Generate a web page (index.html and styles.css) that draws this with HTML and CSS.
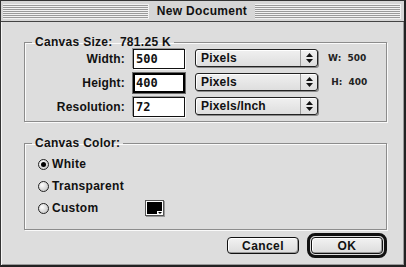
FILE: index.html
```html
<!DOCTYPE html>
<html lang="en">
<head>
<meta charset="UTF-8" />
<title>New Document</title>
<link rel="stylesheet" href="styles.css">
</head>
<body>
<div class="window">
  <div class="titlebar">
    <span class="stripes"></span>
    <span class="title">New Document</span>
    <span class="stripes"></span>
  </div>

  <div class="content">
    <fieldset class="group size-group">
      <legend>Canvas Size:&nbsp; 781.25 K</legend>
      <div class="rows">
        <label class="lbl">Width:</label>
        <div class="field">500</div>
        <div class="popup"><span>Pixels</span><span class="arrows"><svg width="7" height="10" viewBox="0 0 7 10"><polygon points="3.5 0, 7 4, 0 4" fill="#111"/><polygon points="0 6, 7 6, 3.5 10" fill="#111"/></svg></span></div>
        <span class="note">W:&nbsp; 500</span>

        <label class="lbl">Height:</label>
        <div class="field focused">400</div>
        <div class="popup"><span>Pixels</span><span class="arrows"><svg width="7" height="10" viewBox="0 0 7 10"><polygon points="3.5 0, 7 4, 0 4" fill="#111"/><polygon points="0 6, 7 6, 3.5 10" fill="#111"/></svg></span></div>
        <span class="note">&nbsp;H:&nbsp; 400</span>

        <label class="lbl">Resolution:</label>
        <div class="field">72</div>
        <div class="popup"><span>Pixels/Inch</span><span class="arrows"><svg width="7" height="10" viewBox="0 0 7 10"><polygon points="3.5 0, 7 4, 0 4" fill="#111"/><polygon points="0 6, 7 6, 3.5 10" fill="#111"/></svg></span></div>
        <span class="note"></span>
      </div>
    </fieldset>

    <fieldset class="group color-group">
      <legend>Canvas Color:</legend>
      <div class="radios">
        <div class="radio-row"><span class="radio checked"></span><span>White</span></div>
        <div class="radio-row"><span class="radio"></span><span>Transparent</span></div>
        <div class="radio-row"><span class="radio"></span><span class="custom-label">Custom</span><span class="swatch"><span class="swatch-arrow"></span></span></div>
      </div>
    </fieldset>

    <div class="buttons">
      <button class="btn">Cancel</button>
      <span class="default-ring"><button class="btn">OK</button></span>
    </div>
  </div>
</div>
</body>
</html>
```

FILE: styles.css
```css
:root {
  --face: #dddddd;
  --etch: #8c8c8c;
  --font-ui: "Liberation Sans", Arial, sans-serif;
  --font-mono: "DejaVu Sans Mono", monospace;
}

body {
  margin: 0;
  background: var(--face);
  font-family: var(--font-ui);
  font-size: 12px;
  font-weight: bold;
  color: #111;
}

.window {
  width: 406px;
  height: 267px;
  box-sizing: border-box;
  background: var(--face);
  border: 1px solid #333;
  border-right: 2px solid #222;
  border-bottom: 2px solid #222;
  box-shadow: inset 1px 1px 0 #f6f6f6, inset -1px -1px 0 #9a9a9a;
}

.titlebar {
  height: 20px;
  display: flex;
  align-items: center;
  gap: 6px;
  padding: 0 3px 0 2px;
  border-bottom: 1px solid #444;
  background: #d6d6d6;
}

.stripes {
  flex: 1;
  height: 15px;
  background: repeating-linear-gradient(to bottom, #f2f2f2 0 1px, #9a9a9a 1px 2px);
  border-right: 1px solid #f2f2f2;
}

.title {
  font-size: 12px;
  letter-spacing: 0.3px;
  padding: 0 2px;
}

.content {
  padding: 13px 17px 0 23px;
}

.group {
  margin: 0;
  padding: 0;
  border: 1px solid var(--etch);
  box-shadow: inset 1px 1px 0 #fafafa, 1px 1px 0 #fafafa;
  min-width: 0;
}

.group legend {
  margin-left: 7px;
  padding: 0 3px;
  line-height: 14px;
  font-size: 12px;
  letter-spacing: 0.3px;
}

.rows {
  display: grid;
  grid-template-columns: 100px 52px 125px auto;
  grid-template-rows: 20px 20px 20px;
  column-gap: 8px;
  row-gap: 4px;
  padding-bottom: 4px;
  align-items: start;
}

.lbl {
  justify-self: end;
  line-height: 20px;
  letter-spacing: 0.2px;
}

.field {
  height: 20px;
  box-sizing: border-box;
  border: 1px solid #111;
  background: #fff;
  box-shadow: -1px -1px 0 #9a9a9a, 1px 1px 0 #fbfbfb;
  font-family: var(--font-mono);
  font-size: 12px;
  line-height: 18px;
  padding-left: 2px;
}

.field.focused {
  border: 2px solid #000;
  line-height: 16px;
  padding-left: 1px;
  box-shadow: 0 0 0 1px #6a6a6a;
}

.popup {
  margin-left: 2px;
  height: 18px;
  box-sizing: border-box;
  display: flex;
  align-items: center;
  border: 1px solid #222;
  border-radius: 3px;
  background: linear-gradient(#f0f0f0, #dedede);
  box-shadow: inset 1px 1px 0 #fff, 1px 1px 0 #8a8a8a;
  padding-left: 5px;
  letter-spacing: 0.2px;
}

.popup span:first-child { flex: 1; }

.arrows {
  width: 16px;
  height: 16px;
  display: flex;
  align-items: center;
  justify-content: center;
  border-left: 1px solid #9a9a9a;
}

.note {
  font-family: "DejaVu Sans", sans-serif;
  font-size: 9px;
  line-height: 18px;
  color: #222;
  padding-left: 2px;
}

.color-group { margin-top: 14px; }

.radios {
  padding: 3px 0 10px 13px;
}

.radio-row {
  height: 22px;
  display: flex;
  align-items: center;
  gap: 3px;
  letter-spacing: 0.3px;
}

.radio {
  width: 11px;
  height: 11px;
  box-sizing: border-box;
  border-radius: 50%;
  border: 1px solid #222;
  background: radial-gradient(circle at 35% 35%, #fff, #cfcfcf 70%);
  position: relative;
}

.radio.checked::after {
  content: "";
  position: absolute;
  left: 2px;
  top: 2px;
  width: 5px;
  height: 5px;
  border-radius: 50%;
  background: #000;
}

.custom-label { width: 91px; }

.swatch {
  width: 17px;
  height: 14px;
  box-sizing: border-box;
  background: #000;
  border: 1px solid #fff;
  box-shadow: 0 0 0 1px #555, 1px 1px 0 1px #999;
  position: relative;
}

.swatch-arrow {
  position: absolute;
  right: -1px;
  bottom: -1px;
  width: 6px;
  height: 4px;
  background: #fff;
}

.swatch-arrow::after {
  content: "";
  position: absolute;
  left: 1px;
  top: 1px;
  border-left: 2px solid transparent;
  border-right: 2px solid transparent;
  border-top: 2px solid #000;
}

.buttons {
  display: flex;
  justify-content: flex-end;
  align-items: center;
  gap: 8px;
  margin-top: 3px;
}

.btn {
  width: 72px;
  height: 17px;
  padding: 0;
  font-family: var(--font-ui);
  font-size: 12px;
  font-weight: bold;
  letter-spacing: 0.4px;
  color: #111;
  border: 1px solid #111;
  border-radius: 4px;
  background: linear-gradient(#f2f2f2, #dcdcdc);
  box-shadow: inset 1px 1px 0 #fff, inset -1px -1px 0 #999;
}

.default-ring {
  display: flex;
  padding: 1px;
  border: 3px solid #111;
  border-radius: 8px;
  background: var(--face);
}
```
